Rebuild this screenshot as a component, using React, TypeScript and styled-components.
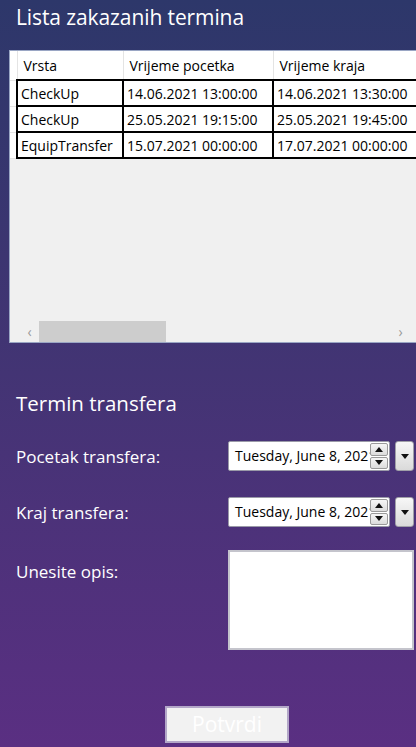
import React from "react";
import styled, { createGlobalStyle } from "styled-components";

const Global = createGlobalStyle`
  html, body { margin: 0; padding: 0; }
  body {
    width: 416px;
    height: 747px;
    overflow: hidden;
    font-family: "Open Sans", "Noto Sans", sans-serif;
  }
  *, *::before, *::after { box-sizing: border-box; }
`;

const Page = styled.div`
  width: 416px;
  height: 747px;
  background: linear-gradient(180deg, #2d376a 0%, #433474 50%, #5a2f82 100%);
  display: flex;
  flex-direction: column;
  color: #fff;
  overflow: hidden;
`;

const Title = styled.h1`
  margin: 3px 0 0 16px;
  font-size: 21px;
  font-weight: 400;
  line-height: 28px;
  letter-spacing: -0.1px;
`;

const GridBox = styled.div`
  margin: 19px 0 0 9px;
  height: 293px;
  border: 1px solid #9aa6c4;
  border-right: none;
  background: #f0f0f0;
  display: flex;
  flex-direction: column;
  overflow: hidden;
`;

const TableArea = styled.div`
  flex: 1;
  overflow: hidden;
`;

const Table = styled.table`
  border-collapse: collapse;
  table-layout: fixed;
  width: 420px;
  font-size: 14px;
  color: #000;
`;

const HeaderCell = styled.th<{ $w: number }>`
  width: ${(p) => p.$w}px;
  height: 29px;
  background: #fff;
  border-right: 1px solid #e4e4e4;
  border-bottom: 1px solid #e4e4e4;
  text-align: left;
  font-weight: 400;
  padding: 0 0 0 6px;
  white-space: nowrap;
  overflow: hidden;
  &:first-child { padding: 0; }
`;

const RowHead = styled.td`
  background: #fff;
  border-bottom: 1px solid #e4e4e4;
  padding: 0;
`;

const Cell = styled.td`
  height: 26px;
  background: #fff;
  border: 2px solid #000;
  padding: 0 0 0 3px;
  white-space: nowrap;
  overflow: hidden;
`;

const ScrollBar = styled.div`
  height: 21px;
  display: flex;
  align-items: center;
  padding: 0 6px 0 10px;
`;

const Arrow = styled.span`
  width: 19px;
  font-size: 14px;
  color: #9a9a9a;
  display: flex;
  align-items: center;
  justify-content: center;
`;

const Thumb = styled.div`
  width: 127px;
  height: 21px;
  background: #cdcdcd;
`;

const Spacer = styled.div`
  flex: 1;
`;

const Section = styled.div`
  margin-top: 46px;
  padding: 0 16px;
  display: flex;
  flex-direction: column;
`;

const SubTitle = styled.h2`
  margin: 0;
  font-size: 20.5px;
  font-weight: 400;
  line-height: 28px;
`;

const FieldRow = styled.div<{ $top: number; $align: string }>`
  margin-top: ${(p) => p.$top}px;
  display: flex;
  align-items: ${(p) => p.$align};
  justify-content: space-between;
  margin-right: -14px;
`;

const Label = styled.span<{ $pad: number }>`
  font-size: 17px;
  line-height: 24px;
  padding-top: ${(p) => p.$pad}px;
`;

const Picker = styled.div`
  display: flex;
  align-items: stretch;
  height: 30px;
  gap: 5px;
`;

const PickerField = styled.div`
  width: 162px;
  display: flex;
  background: #fff;
  border: 1px solid #9a9aa8;
  border-radius: 2px;
  overflow: hidden;
`;

const PickerText = styled.div`
  flex: 1;
  color: #000;
  font-size: 14px;
  line-height: 28px;
  padding-left: 6px;
  white-space: nowrap;
  overflow: hidden;
`;

const Spin = styled.div`
  width: 19px;
  display: flex;
  flex-direction: column;
  gap: 1px;
  padding: 1px 1px 1px 0;
`;

const SpinBtn = styled.div`
  flex: 1;
  background: linear-gradient(#f6f6f6, #dcdcdc);
  border: 1px solid #9a9a9a;
  border-radius: 2px;
  display: flex;
  align-items: center;
  justify-content: center;
`;

const DropBtn = styled.div`
  width: 19px;
  background: linear-gradient(#f7f7f7, #dadada);
  border: 1px solid #a0a0a8;
  border-radius: 3px;
  display: flex;
  align-items: center;
  justify-content: center;
`;

const TextBox = styled.div`
  width: 186px;
  height: 100px;
  background: #fff;
  border: 2px solid #c4c4cc;
`;

const Footer = styled.div`
  flex: 1;
  display: flex;
  align-items: flex-end;
  justify-content: center;
  padding: 0 0 4px 38px;
`;

const Button = styled.button`
  width: 124px;
  height: 37px;
  background: #f2f2f2;
  border: 2px solid #b3a7c8;
  color: #fff;
  font-family: inherit;
  font-size: 21px;
  line-height: 30px;
  padding: 0 0 2px 0;
`;

const Tri = ({ up }: { up?: boolean }) => (
  <svg width="8" height="5" viewBox="0 0 8 5">
    <path d={up ? "M0 5 L4 0 L8 5 Z" : "M0 0 L8 0 L4 5 Z"} fill="#111" />
  </svg>
);

const rows = [
  ["CheckUp", "14.06.2021 13:00:00", "14.06.2021 13:30:00"],
  ["CheckUp", "25.05.2021 19:15:00", "25.05.2021 19:45:00"],
  ["EquipTransfer", "15.07.2021 00:00:00", "17.07.2021 00:00:00"],
];

const DatePicker = () => (
  <Picker>
    <PickerField>
      <PickerText>Tuesday, June 8, 2021</PickerText>
      <Spin>
        <SpinBtn>
          <Tri up />
        </SpinBtn>
        <SpinBtn>
          <Tri />
        </SpinBtn>
      </Spin>
    </PickerField>
    <DropBtn>
      <Tri />
    </DropBtn>
  </Picker>
);

export default function App() {
  return (
    <>
      <Global />
      <Page>
        <Title>Lista zakazanih termina</Title>
        <GridBox>
          <TableArea>
            <Table>
              <thead>
                <tr>
                  <HeaderCell $w={7}></HeaderCell>
                  <HeaderCell $w={106}>Vrsta</HeaderCell>
                  <HeaderCell $w={150}>Vrijeme pocetka</HeaderCell>
                  <HeaderCell $w={157}>Vrijeme kraja</HeaderCell>
                </tr>
              </thead>
              <tbody>
                {rows.map((r, i) => (
                  <tr key={i}>
                    <RowHead />
                    {r.map((c, j) => (
                      <Cell key={j}>{c}</Cell>
                    ))}
                  </tr>
                ))}
              </tbody>
            </Table>
          </TableArea>
          <ScrollBar>
            <Arrow>‹</Arrow>
            <Thumb />
            <Spacer />
            <Arrow>›</Arrow>
          </ScrollBar>
        </GridBox>
        <Section>
          <SubTitle>Termin transfera</SubTitle>
          <FieldRow $top={24} $align="center">
            <Label $pad={2}>Pocetak transfera:</Label>
            <DatePicker />
          </FieldRow>
          <FieldRow $top={26} $align="center">
            <Label $pad={2}>Kraj transfera:</Label>
            <DatePicker />
          </FieldRow>
          <FieldRow $top={23} $align="flex-start">
            <Label $pad={10}>Unesite opis:</Label>
            <TextBox />
          </FieldRow>
        </Section>
        <Footer>
          <Button>Potvrdi</Button>
        </Footer>
      </Page>
    </>
  );
}
